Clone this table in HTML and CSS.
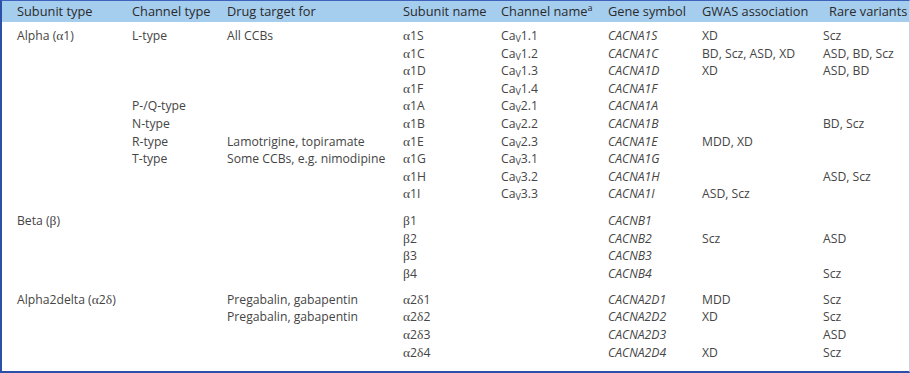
FILE: index.html
```html
<!DOCTYPE html>
<html>
<head>
<meta charset="utf-8">
<link rel="stylesheet" href="styles.css">
</head>
<body>
<div class="frame">
<table class="tbl">
<colgroup>
<col class="c1"><col class="c2"><col class="c3"><col class="c4"><col class="c5"><col class="c6"><col class="c7"><col class="c8">
</colgroup>
<thead>
<tr>
<th class="first">Subunit type</th><th>Channel type</th><th>Drug target for</th><th>Subunit name</th><th>Channel name<sup class="sup">a</sup></th><th>Gene symbol</th><th>GWAS association</th><th class="rare">Rare variants</th>
</tr>
</thead>
<tbody>
<tr class="top"><td class="first">Alpha (<span class="gr">α</span>1)</td><td>L-type</td><td>All CCBs</td><td><span class="gr">α</span>1S</td><td>Ca<sub class="sub">V</sub>1.1</td><td class="gene">CACNA1S</td><td>XD</td><td>Scz</td></tr>
<tr><td class="first"></td><td></td><td></td><td><span class="gr">α</span>1C</td><td>Ca<sub class="sub">V</sub>1.2</td><td class="gene">CACNA1C</td><td>BD, Scz, ASD, XD</td><td>ASD, BD, Scz</td></tr>
<tr><td class="first"></td><td></td><td></td><td><span class="gr">α</span>1D</td><td>Ca<sub class="sub">V</sub>1.3</td><td class="gene">CACNA1D</td><td>XD</td><td>ASD, BD</td></tr>
<tr><td class="first"></td><td></td><td></td><td><span class="gr">α</span>1F</td><td>Ca<sub class="sub">V</sub>1.4</td><td class="gene">CACNA1F</td><td></td><td></td></tr>
<tr><td class="first"></td><td>P-/Q-type</td><td></td><td><span class="gr">α</span>1A</td><td>Ca<sub class="sub">V</sub>2.1</td><td class="gene">CACNA1A</td><td></td><td></td></tr>
<tr><td class="first"></td><td>N-type</td><td></td><td><span class="gr">α</span>1B</td><td>Ca<sub class="sub">V</sub>2.2</td><td class="gene">CACNA1B</td><td></td><td>BD, Scz</td></tr>
<tr><td class="first"></td><td>R-type</td><td>Lamotrigine, topiramate</td><td><span class="gr">α</span>1E</td><td>Ca<sub class="sub">V</sub>2.3</td><td class="gene">CACNA1E</td><td>MDD, XD</td><td></td></tr>
<tr><td class="first"></td><td>T-type</td><td>Some CCBs, e.g. nimodipine</td><td><span class="gr">α</span>1G</td><td>Ca<sub class="sub">V</sub>3.1</td><td class="gene">CACNA1G</td><td></td><td></td></tr>
<tr><td class="first"></td><td></td><td></td><td><span class="gr">α</span>1H</td><td>Ca<sub class="sub">V</sub>3.2</td><td class="gene">CACNA1H</td><td></td><td>ASD, Scz</td></tr>
<tr><td class="first"></td><td></td><td></td><td><span class="gr">α</span>1I</td><td>Ca<sub class="sub">V</sub>3.3</td><td class="gene">CACNA1I</td><td>ASD, Scz</td><td></td></tr>
<tr class="group"><td class="first">Beta (<span class="gr">β</span>)</td><td></td><td></td><td><span class="gr">β</span>1</td><td></td><td class="gene">CACNB1</td><td></td><td></td></tr>
<tr><td class="first"></td><td></td><td></td><td><span class="gr">β</span>2</td><td></td><td class="gene">CACNB2</td><td>Scz</td><td>ASD</td></tr>
<tr><td class="first"></td><td></td><td></td><td><span class="gr">β</span>3</td><td></td><td class="gene">CACNB3</td><td></td><td></td></tr>
<tr><td class="first"></td><td></td><td></td><td><span class="gr">β</span>4</td><td></td><td class="gene">CACNB4</td><td></td><td>Scz</td></tr>
<tr class="group2"><td class="first">Alpha2delta (<span class="gr">α</span>2<span class="gr">δ</span>)</td><td></td><td>Pregabalin, gabapentin</td><td><span class="gr">α</span>2<span class="gr">δ</span>1</td><td></td><td class="gene">CACNA2D1</td><td>MDD</td><td>Scz</td></tr>
<tr><td class="first"></td><td></td><td>Pregabalin, gabapentin</td><td><span class="gr">α</span>2<span class="gr">δ</span>2</td><td></td><td class="gene">CACNA2D2</td><td>XD</td><td>Scz</td></tr>
<tr><td class="first"></td><td></td><td></td><td><span class="gr">α</span>2<span class="gr">δ</span>3</td><td></td><td class="gene">CACNA2D3</td><td></td><td>ASD</td></tr>
<tr class="last"><td class="first"></td><td></td><td></td><td><span class="gr">α</span>2<span class="gr">δ</span>4</td><td></td><td class="gene">CACNA2D4</td><td>XD</td><td>Scz</td></tr>
</tbody>
</table>
</div>
</body>
</html>
```

FILE: styles.css
```css
html, body {
  margin: 0;
  padding: 0;
  background: #ffffff;
}

.frame {
  width: 910px;
  height: 373px;
  box-sizing: border-box;
  border-top: 1px solid #3f63bd;
  border-left: 2px solid #2c4fa8;
  border-right: 1px solid #c9d2e6;
  border-bottom: 2px solid #2c4fa8;
  overflow: hidden;
}

.tbl {
  border-collapse: collapse;
  table-layout: fixed;
  width: 907px;
  font-family: "Open Sans", "Noto Sans", sans-serif;
  font-size: 12.2px;
  color: #454545;
}

.c1 { width: 130px; }
.c2 { width: 95px; }
.c3 { width: 176px; }
.c4 { width: 98px; }
.c5 { width: 107px; }
.c6 { width: 94px; }
.c7 { width: 121px; }
.c8 { width: 86px; }

.tbl th {
  background: #a5cdee;
  color: #2a2a2a;
  font-weight: normal;
  text-align: left;
  height: 21px;
  padding: 0;
  line-height: 21px;
  white-space: nowrap;
  font-size: 12.8px;
}

.tbl td {
  padding: 0;
  height: 17.6px;
  line-height: 17.6px;
  white-space: nowrap;
  vertical-align: top;
}

.tbl .first {
  padding-left: 15px;
}

.tbl th.rare {
  padding-left: 6px;
}

.tbl tr.top td {
  padding-top: 5px;
}

.tbl tr.group td {
  padding-top: 9px;
}

.tbl tr.group2 td {
  padding-top: 8.5px;
}

.gene {
  font-style: italic;
}

.gr {
  font-family: "Liberation Serif", "DejaVu Serif", serif;
  font-size: 13.5px;
}

.sub {
  font-size: 9px;
  vertical-align: -2px;
  line-height: 0;
}

.sup {
  font-size: 9px;
  vertical-align: 5px;
  line-height: 0;
}
```
